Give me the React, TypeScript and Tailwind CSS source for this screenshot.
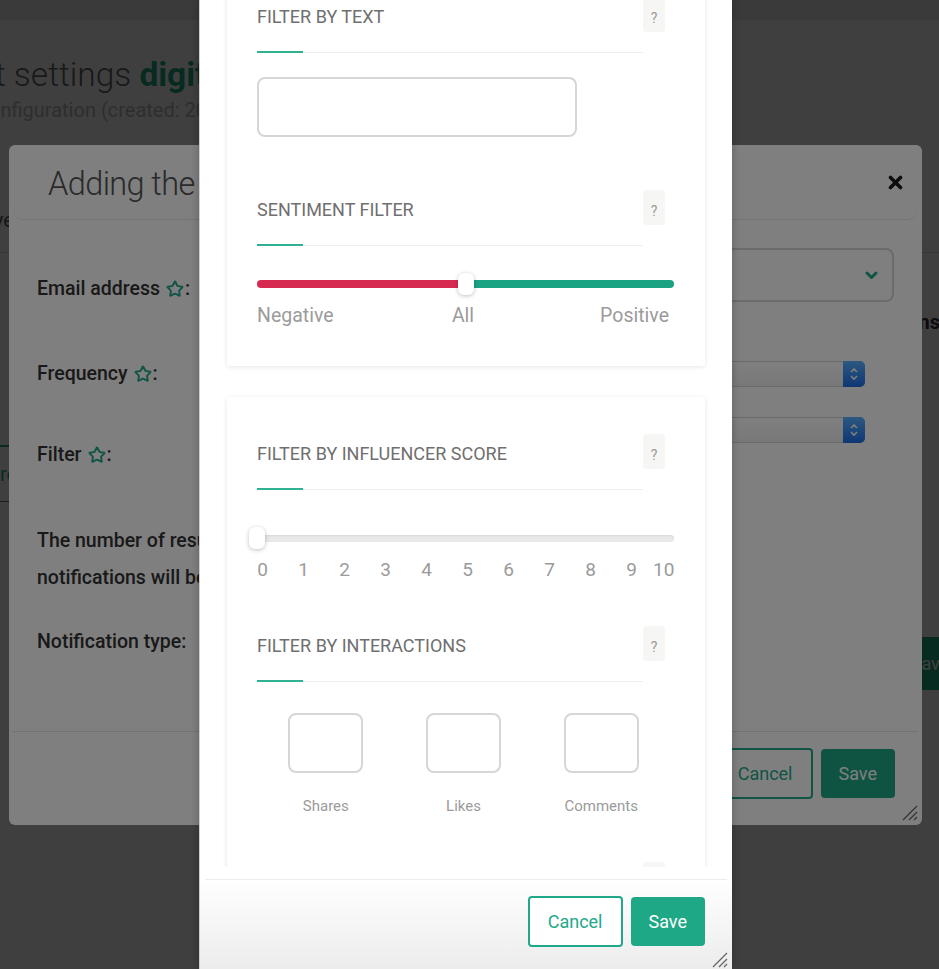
import { Star } from 'lucide-react';

const Help = () => (
  <div className="flex h-[35px] w-[22px] shrink-0 justify-center rounded-[4px] bg-[#f6f6f4] pt-[13px] text-[14px] leading-[17px] text-[#9a9a9a]">
    ?
  </div>
);

const SectionHeader = ({ title }: { title: string }) => (
  <div className="flex">
    <div className="w-[386px]">
      <div className="pt-[8px] text-[18px] leading-[24px] text-[#6f6f6f]">{title}</div>
      <div className="mt-[22px] flex h-[2px] items-center">
        <div className="h-[2px] w-[46px] bg-[#2db392]" />
        <div className="h-px flex-1 bg-[#efefef]" />
      </div>
    </div>
    <Help />
  </div>
);

const ResizeGrip = () => (
  <svg width="18" height="18" viewBox="0 0 18 18" fill="none" stroke="#666" strokeWidth="1.3">
    <path d="M17 3L3 17M17 9L9 17M17 14L14 17" />
  </svg>
);

const FooterButtons = () => (
  <div className="flex items-center justify-end gap-[8px]">
    <button className="h-[51px] rounded-[4px] border-2 border-[#1fa98a] bg-white px-[18px] text-[18px] text-[#1fa98a]">
      Cancel
    </button>
    <button className="h-[49px] rounded-[4px] bg-[#1ea886] px-[18px] text-[18px] text-white">Save</button>
  </div>
);

const NativeSelect = () => (
  <div className="flex h-[26px] justify-end rounded-[5px] border border-[#d4d4d4] bg-linear-to-b from-white to-[#f1f1f1]">
    <div className="-my-px -mr-px flex w-[22px] items-center justify-center rounded-r-[5px] bg-linear-to-b from-[#5bb0ff] to-[#1c6ee8]">
      <svg width="10" height="16" viewBox="0 0 10 16" fill="none" stroke="white" strokeWidth="1.6">
        <path d="M2 6l3-3 3 3M2 10l3 3 3-3" />
      </svg>
    </div>
  </div>
);

const Required = () => (
  <Star size={18} strokeWidth={2.6} className="ml-[6px] mr-px inline-block align-[-3px] text-[#1fa98a]" />
);

export default function App() {
  const scores = ['0', '1', '2', '3', '4', '5', '6', '7', '8', '9'];

  return (
    <div className="relative h-[969px] w-[939px] overflow-hidden bg-white font-['Roboto',sans-serif]">
      {/* page underneath */}
      <div className="h-[20px] bg-[#e8e8e8]" />
      <div className="-ml-[63px] mt-[35px] whitespace-nowrap text-[33.5px] font-light leading-[40px] text-[#666]">
        Alert settings <span className="font-bold text-[#1ea886]">digital monitoring</span>
      </div>
      <div className="-ml-[24px] mt-px whitespace-nowrap text-[20px] leading-[28px] text-[#b9b9b9]">
        Configuration (created: 2019-03-14 10:22)
      </div>
      <div className="mt-[46px] flex h-[83px] items-center border-b border-[#dcdcdc] pt-[18px]">
        <span className="-ml-[20px] text-[20px] text-[#555]">Overview</span>
      </div>
      <div className="flex justify-between">
        <div className="-ml-[60px] w-[69px] pt-[192px]">
          <div className="flex h-[57px] items-center border-t-2 border-b border-t-[#1ea886] border-b-[#777] pl-[47px] text-[20px] text-[#1ea886]">
            Create
          </div>
        </div>
        <div className="-mr-[60px] w-[99px] pt-[57px]">
          <div className="flex justify-end whitespace-nowrap pr-[59px] text-[20px] font-bold leading-[24px] text-[#333]">
            <span>Conditions</span>
          </div>
          <div className="-ml-[10px] mt-[303px] flex h-[53px] w-[80px] items-center justify-center rounded-[4px] bg-[#1ea886] text-[18px] text-white">
            Save
          </div>
        </div>
      </div>

      <div className="absolute inset-0 bg-black/50" />

      {/* notification modal */}
      <div className="absolute left-[9px] top-[145px] flex h-[680px] w-[913px] flex-col rounded-[6px] bg-white">
        <div className="mx-[4px] flex h-[75px] shrink-0 items-center justify-between rounded-b-[10px] border-b border-[#e8e8e8] pl-[35px] pr-[15px]">
          <div className="mt-[3px] whitespace-nowrap text-[32.5px] font-light leading-[44px] tracking-[-0.6px] text-[#555]">
            Adding the new notification
          </div>
          <svg width="15" height="15" viewBox="0 0 15 15" stroke="#1a1a1a" strokeWidth="3.6" strokeLinecap="round">
            <path d="M2.5 2.5L12.5 12.5M12.5 2.5L2.5 12.5" />
          </svg>
        </div>
        <div className="flex flex-1">
          <div className="w-[300px] shrink-0 whitespace-nowrap pl-[28px] text-[19.5px] font-medium leading-[26px] text-[#333]">
            <div className="mt-[56px]">
              Email address
              <Required />:
            </div>
            <div className="mt-[59px]">
              Frequency
              <Required />:
            </div>
            <div className="mt-[55px]">
              Filter
              <Required />:
            </div>
            <div className="mt-[54px] leading-[37px]">
              The number of results in
              <br />
              notifications will be limited to:
            </div>
            <div className="mt-[33px]">Notification type:</div>
          </div>
          <div className="flex-1 pr-[28px]">
            <div className="mt-[28px] flex h-[54px] items-center justify-end rounded-[8px] border-2 border-[#d6d6d6] pr-[14px]">
              <svg width="13" height="9" viewBox="0 0 13 9" fill="none" stroke="#1fa98a" strokeWidth="3" strokeLinecap="round" strokeLinejoin="round">
                <path d="M2 2l4.5 4.5L11 2" />
              </svg>
            </div>
            <div className="mr-[29px] mt-[59px]">
              <NativeSelect />
            </div>
            <div className="mr-[29px] mt-[30px]">
              <NativeSelect />
            </div>
          </div>
        </div>
        <div className="mx-[4px] h-[94px] shrink-0 border-t border-[#e5e5e5] pr-[23px] pt-[16px]">
          <FooterButtons />
        </div>
        <div className="absolute bottom-[4px] right-[4px]">
          <ResizeGrip />
        </div>
      </div>

      <div className="absolute inset-0 bg-black/50" />

      {/* filter modal */}
      <div className="absolute left-[199px] top-0 flex h-[969px] w-[533px] flex-col border-l border-[#cfcfcf] bg-white shadow-[0_0_8px_rgba(0,0,0,0.25)]">
        <div className="h-[867px] shrink-0 overflow-hidden px-[27px]">
          <div className="-mt-[40px]">
            <div className="rounded-[2px] bg-white px-[30px] pb-[38px] pt-[37px] shadow-[0_1px_5px_rgba(0,0,0,0.1)]">
              <SectionHeader title="FILTER BY TEXT" />
              <div className="mt-[24px] h-[60px] w-[320px] rounded-[8px] border-2 border-[#d6d6d6]" />

              <div className="mt-[53px]">
                <SectionHeader title="SENTIMENT FILTER" />
                <div className="relative mt-[27px] flex h-[22px] w-[417px] items-center">
                  <div className="h-[8px] w-[208px] rounded-l-full bg-[#d72a50]" />
                  <div className="h-[8px] flex-1 rounded-r-full bg-[#19a383]" />
                  <div className="absolute left-[201px] top-0 h-[22px] w-[16px] rounded-[6px] bg-white shadow-[0_1px_4px_rgba(0,0,0,0.25)]" />
                </div>
                <div className="mt-[9px] flex w-[412px] text-[19.5px] leading-[24px] text-[#9b9b9b]">
                  <span className="flex-1">Negative</span>
                  <span className="flex-1 text-center">All</span>
                  <span className="flex-1 text-right">Positive</span>
                </div>
              </div>
            </div>

            <div className="mt-[31px] rounded-[2px] bg-white px-[30px] pb-[60px] pt-[37px] shadow-[0_1px_5px_rgba(0,0,0,0.1)]">
              <SectionHeader title="FILTER BY INFLUENCER SCORE" />
              <div className="relative mt-[37px] flex h-[22px] w-[417px] items-center">
                <div className="h-[7px] w-full rounded-full bg-[#e9e9e9] shadow-[inset_0_1px_2px_rgba(0,0,0,0.08)]" />
                <div className="absolute -left-[8px] top-0 h-[22px] w-[16px] rounded-[6px] bg-white shadow-[0_1px_4px_rgba(0,0,0,0.25)]" />
              </div>
              <div className="mt-[9px] flex gap-[30px] text-[19px] leading-[24px] text-[#9b9b9b]">
                {scores.map((s) => (
                  <span key={s} className="w-[11px] text-center">
                    {s}
                  </span>
                ))}
                <span className="-ml-[14px]">10</span>
              </div>

              <div className="mt-[44px]">
                <SectionHeader title="FILTER BY INTERACTIONS" />
                <div className="mt-[31px] grid w-[413px] grid-cols-3">
                  {['Shares', 'Likes', 'Comments'].map((label) => (
                    <div key={label} className="flex flex-col items-center">
                      <div className="h-[60px] w-[75px] rounded-[8px] border-2 border-[#d6d6d6]" />
                      <div className="mt-[23px] text-[15px] leading-[20px] text-[#9b9b9b]">{label}</div>
                    </div>
                  ))}
                </div>
              </div>

              <div className="mt-[46px]">
                <SectionHeader title="FILTER BY LANGUAGE" />
              </div>
            </div>
          </div>
        </div>
        <div className="mx-[5px] mt-[12px] h-px shrink-0 bg-[#ececec]" />
        <div className="flex-1 bg-linear-to-b from-white to-[#ececec] pr-[27px] pt-[16px]">
          <FooterButtons />
        </div>
        <div className="absolute bottom-px right-[4px]">
          <ResizeGrip />
        </div>
      </div>
    </div>
  );
}
